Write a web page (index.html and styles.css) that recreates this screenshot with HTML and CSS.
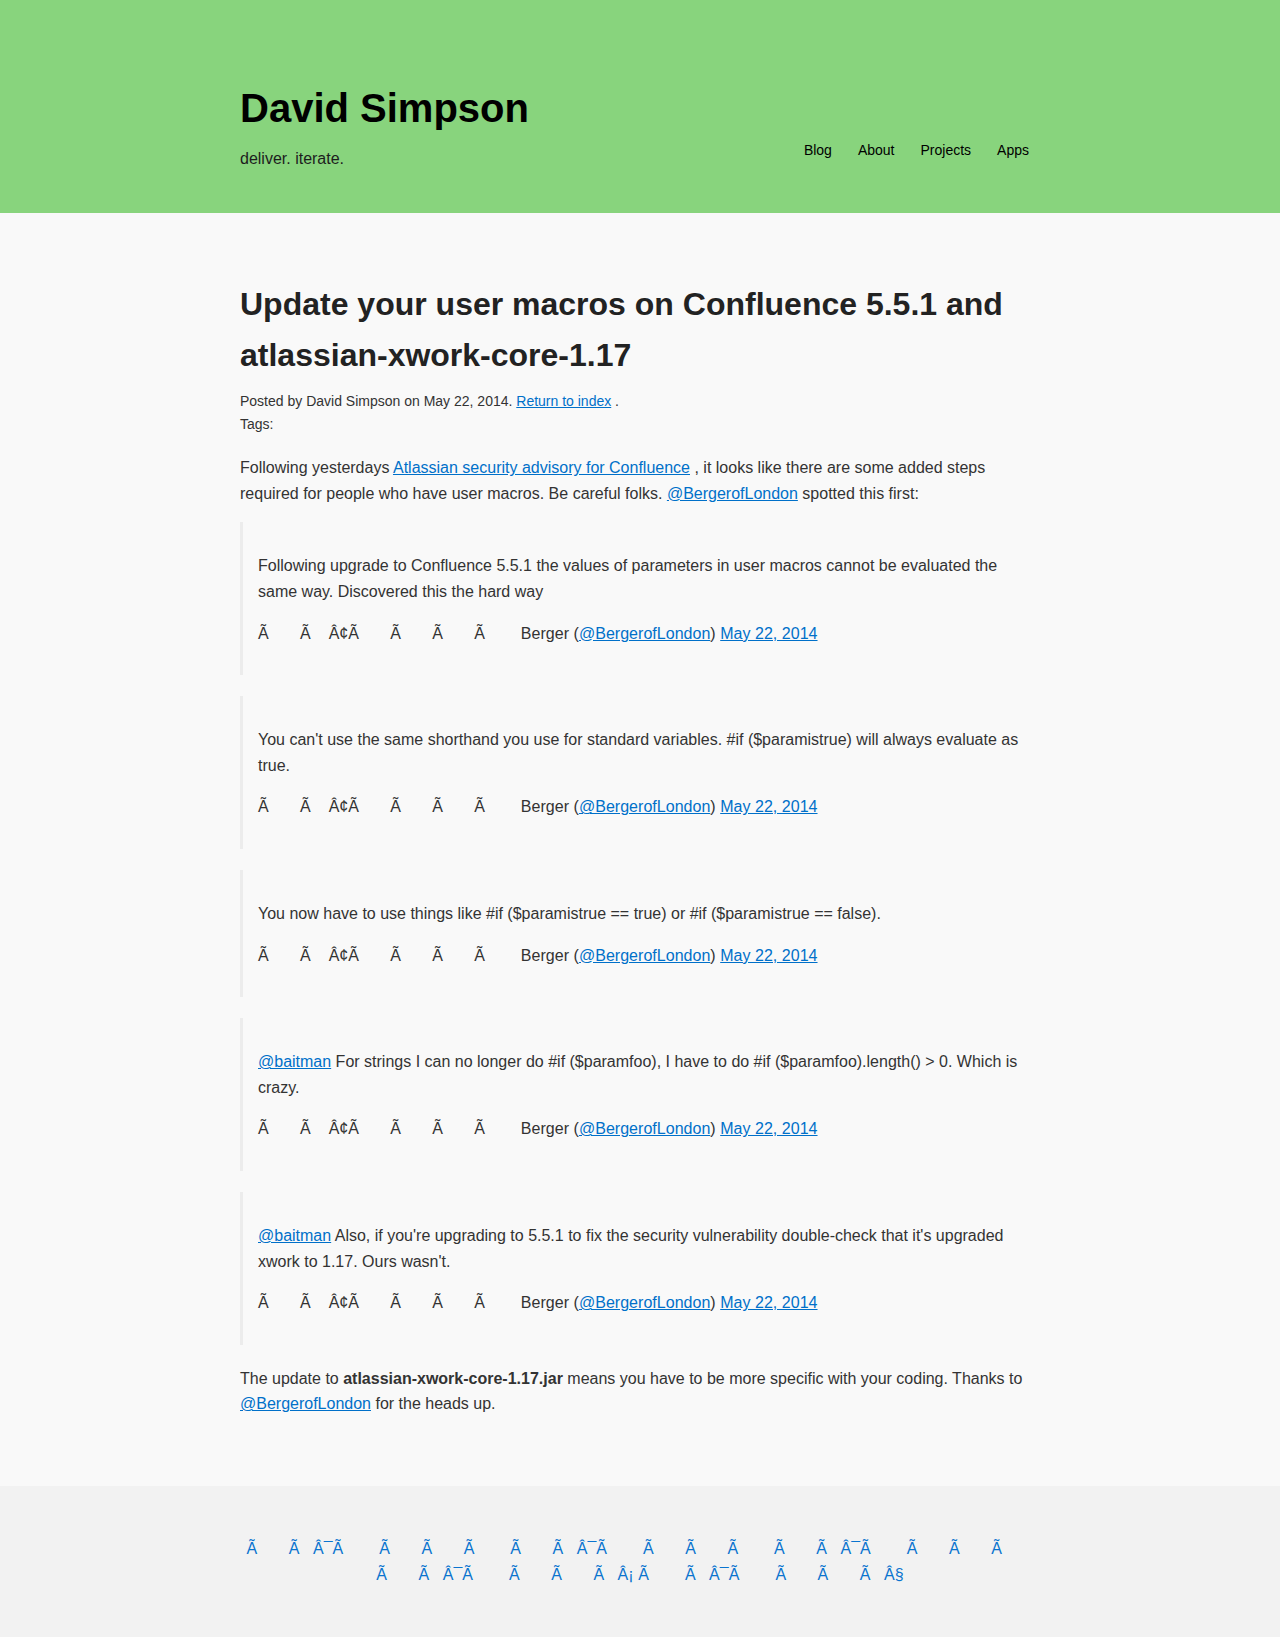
FILE: index.html
```html
<!DOCTYPE html>
<html lang="en">
<head>
<meta charset="utf-8">
<title>Update your user macros on Confluence 5.5.1 and atlassian-xwork-core-1.17 - David Simpson</title>
<link rel="stylesheet" href="styles.css">
</head>
<body>
<header class="site-header">
  <div class="wrap header-inner">
    <div class="brand">
      <h1 class="site-title">David Simpson</h1>
      <p class="tagline">deliver. iterate.</p>
    </div>
    <nav class="site-nav">
      <a href="#">Blog</a>
      <a href="#">About</a>
      <a href="#">Projects</a>
      <a href="#">Apps</a>
    </nav>
  </div>
</header>

<main class="wrap post">
  <h1 class="post-title">Update your user macros on Confluence 5.5.1 and atlassian-xwork-core-1.17</h1>
  <div class="meta">
    <p>Posted by David Simpson on May 22, 2014. <a href="#">Return to index</a> .</p>
    <p>Tags:</p>
  </div>

  <p>Following yesterdays <a href="#">Atlassian security advisory for Confluence</a> , it looks like there are some added steps required for people who have user macros. Be careful folks. <a href="#">@BergerofLondon</a> spotted this first:</p>

  <blockquote class="tweet">
    <p>Following upgrade to Confluence 5.5.1 the values of parameters in user macros cannot be evaluated the same way. Discovered this the hard way</p>
    <p class="tweet-meta">Ã&nbsp;&nbsp;&nbsp;&nbsp;&nbsp;&nbsp;&nbsp;Ã&nbsp;&nbsp;&nbsp;&nbsp;Â¢Ã&nbsp;&nbsp;&nbsp;&nbsp;&nbsp;&nbsp;&nbsp;Ã&nbsp;&nbsp;&nbsp;&nbsp;&nbsp;&nbsp;&nbsp;Ã&nbsp;&nbsp;&nbsp;&nbsp;&nbsp;&nbsp;&nbsp;Ã&nbsp;&nbsp;&nbsp;&nbsp;&nbsp;&nbsp;&nbsp; Berger (<a href="#">@BergerofLondon</a>) <a href="#">May 22, 2014</a></p>
  </blockquote>

  <blockquote class="tweet">
    <p>You can't use the same shorthand you use for standard variables. #if ($paramistrue) will always evaluate as true.</p>
    <p class="tweet-meta">Ã&nbsp;&nbsp;&nbsp;&nbsp;&nbsp;&nbsp;&nbsp;Ã&nbsp;&nbsp;&nbsp;&nbsp;Â¢Ã&nbsp;&nbsp;&nbsp;&nbsp;&nbsp;&nbsp;&nbsp;Ã&nbsp;&nbsp;&nbsp;&nbsp;&nbsp;&nbsp;&nbsp;Ã&nbsp;&nbsp;&nbsp;&nbsp;&nbsp;&nbsp;&nbsp;Ã&nbsp;&nbsp;&nbsp;&nbsp;&nbsp;&nbsp;&nbsp; Berger (<a href="#">@BergerofLondon</a>) <a href="#">May 22, 2014</a></p>
  </blockquote>

  <blockquote class="tweet">
    <p>You now have to use things like #if ($paramistrue == true) or #if ($paramistrue == false).</p>
    <p class="tweet-meta">Ã&nbsp;&nbsp;&nbsp;&nbsp;&nbsp;&nbsp;&nbsp;Ã&nbsp;&nbsp;&nbsp;&nbsp;Â¢Ã&nbsp;&nbsp;&nbsp;&nbsp;&nbsp;&nbsp;&nbsp;Ã&nbsp;&nbsp;&nbsp;&nbsp;&nbsp;&nbsp;&nbsp;Ã&nbsp;&nbsp;&nbsp;&nbsp;&nbsp;&nbsp;&nbsp;Ã&nbsp;&nbsp;&nbsp;&nbsp;&nbsp;&nbsp;&nbsp; Berger (<a href="#">@BergerofLondon</a>) <a href="#">May 22, 2014</a></p>
  </blockquote>

  <blockquote class="tweet">
    <p><a href="#">@baitman</a> For strings I can no longer do #if ($paramfoo), I have to do #if ($paramfoo).length() &gt; 0. Which is crazy.</p>
    <p class="tweet-meta">Ã&nbsp;&nbsp;&nbsp;&nbsp;&nbsp;&nbsp;&nbsp;Ã&nbsp;&nbsp;&nbsp;&nbsp;Â¢Ã&nbsp;&nbsp;&nbsp;&nbsp;&nbsp;&nbsp;&nbsp;Ã&nbsp;&nbsp;&nbsp;&nbsp;&nbsp;&nbsp;&nbsp;Ã&nbsp;&nbsp;&nbsp;&nbsp;&nbsp;&nbsp;&nbsp;Ã&nbsp;&nbsp;&nbsp;&nbsp;&nbsp;&nbsp;&nbsp; Berger (<a href="#">@BergerofLondon</a>) <a href="#">May 22, 2014</a></p>
  </blockquote>

  <blockquote class="tweet">
    <p><a href="#">@baitman</a> Also, if you're upgrading to 5.5.1 to fix the security vulnerability double-check that it's upgraded xwork to 1.17. Ours wasn't.</p>
    <p class="tweet-meta">Ã&nbsp;&nbsp;&nbsp;&nbsp;&nbsp;&nbsp;&nbsp;Ã&nbsp;&nbsp;&nbsp;&nbsp;Â¢Ã&nbsp;&nbsp;&nbsp;&nbsp;&nbsp;&nbsp;&nbsp;Ã&nbsp;&nbsp;&nbsp;&nbsp;&nbsp;&nbsp;&nbsp;Ã&nbsp;&nbsp;&nbsp;&nbsp;&nbsp;&nbsp;&nbsp;Ã&nbsp;&nbsp;&nbsp;&nbsp;&nbsp;&nbsp;&nbsp; Berger (<a href="#">@BergerofLondon</a>) <a href="#">May 22, 2014</a></p>
  </blockquote>

  <p>The update to <strong>atlassian-xwork-core-1.17.jar</strong> means you have to be more specific with your coding. Thanks to <a href="#">@BergerofLondon</a> for the heads up.</p>
</main>

<footer class="site-footer">
  <div class="wrap">
    <p class="footer-text">Ã&nbsp;&nbsp;&nbsp;&nbsp;&nbsp;&nbsp;&nbsp;Ã&nbsp;&nbsp;&nbsp;Â¯Ã&nbsp;&nbsp;&nbsp;&nbsp;&nbsp;&nbsp;&nbsp; Ã&nbsp;&nbsp;&nbsp;&nbsp;&nbsp;&nbsp;&nbsp;Ã&nbsp;&nbsp;&nbsp;&nbsp;&nbsp;&nbsp;&nbsp;Ã&nbsp;&nbsp;&nbsp;&nbsp;&nbsp;&nbsp;&nbsp; Ã&nbsp;&nbsp;&nbsp;&nbsp;&nbsp;&nbsp;&nbsp;Ã&nbsp;&nbsp;&nbsp;Â¯Ã&nbsp;&nbsp;&nbsp;&nbsp;&nbsp;&nbsp;&nbsp; Ã&nbsp;&nbsp;&nbsp;&nbsp;&nbsp;&nbsp;&nbsp;Ã&nbsp;&nbsp;&nbsp;&nbsp;&nbsp;&nbsp;&nbsp;Ã&nbsp;&nbsp;&nbsp;&nbsp;&nbsp;&nbsp;&nbsp; Ã&nbsp;&nbsp;&nbsp;&nbsp;&nbsp;&nbsp;&nbsp;Ã&nbsp;&nbsp;&nbsp;Â¯Ã&nbsp;&nbsp;&nbsp;&nbsp;&nbsp;&nbsp;&nbsp; Ã&nbsp;&nbsp;&nbsp;&nbsp;&nbsp;&nbsp;&nbsp;Ã&nbsp;&nbsp;&nbsp;&nbsp;&nbsp;&nbsp;&nbsp;Ã&nbsp;&nbsp;&nbsp;&nbsp;&nbsp;&nbsp;&nbsp; Ã&nbsp;&nbsp;&nbsp;&nbsp;&nbsp;&nbsp;&nbsp;Ã&nbsp;&nbsp;&nbsp;Â¯Ã&nbsp;&nbsp;&nbsp;&nbsp;&nbsp;&nbsp;&nbsp; Ã&nbsp;&nbsp;&nbsp;&nbsp;&nbsp;&nbsp;&nbsp;Ã&nbsp;&nbsp;&nbsp;&nbsp;&nbsp;&nbsp;&nbsp;Ã&nbsp;&nbsp;&nbsp;Â¡&nbsp;Ã&nbsp;&nbsp;&nbsp;&nbsp;&nbsp;&nbsp;&nbsp; Ã&nbsp;&nbsp;&nbsp;Â¯Ã&nbsp;&nbsp;&nbsp;&nbsp;&nbsp;&nbsp;&nbsp; Ã&nbsp;&nbsp;&nbsp;&nbsp;&nbsp;&nbsp;&nbsp;Ã&nbsp;&nbsp;&nbsp;&nbsp;&nbsp;&nbsp;&nbsp;Ã&nbsp;&nbsp;&nbsp;Â§</p>
  </div>
</footer>
</body>
</html>
```

FILE: styles.css
```css
* {
  box-sizing: border-box;
}

html {
  background: #f9f9f9;
}

body {
  margin: 0;
  background: #f9f9f9;
  color: #333;
  font-family: "Liberation Sans", Arial, Helvetica, sans-serif;
  font-size: 16px;
  line-height: 1.6;
}

a {
  color: #0070c9;
  text-decoration: underline;
}

.wrap {
  width: 800px;
  margin: 0 auto;
}

/* Header */
.site-header {
  background: #88d47d;
  padding: 84.5px 0 42px;
}

.header-inner {
  display: flex;
  justify-content: space-between;
  align-items: flex-end;
}

.site-title {
  margin: 0;
  font-size: 40px;
  line-height: 46px;
  font-weight: bold;
  color: #000;
}

.tagline {
  margin: 15px 0 0;
  font-size: 16px;
  line-height: 1.6;
  color: #1d1d1d;
}

.site-nav {
  display: flex;
  padding-bottom: 9.5px;
  margin-right: -2px;
}

.site-nav a {
  padding: 0 13px;
  font-size: 14px;
  line-height: 1.6;
  color: #000;
  text-decoration: none;
}

/* Post */
.post {
  padding: 66px 0 53px;
}

.post-title {
  margin: 0 0 9px;
  font-size: 32px;
  line-height: 1.6;
  font-weight: bold;
  color: #222;
}

.meta {
  margin: 0 0 20px;
  font-size: 14px;
  line-height: 1.6;
}

.post p {
  margin-top: 16px;
  margin-bottom: 16px;
}

.post .meta p {
  margin: 0;
}

.post .meta + p {
  margin-top: 0;
}

.tweet {
  margin: 16px 0 21px;
  padding: 15px 14px 13px 15px;
  border-left: 3px solid #ececec;
}

.post .tweet p {
  margin: 16px 0;
}

.post .tweet .tweet-meta {
  letter-spacing: 0.03px;
}

/* Footer */
.site-footer {
  background: #f2f2f2;
  padding: 34px 0;
}

.footer-text {
  margin: 16px 0;
  text-align: center;
  color: #0a74cf;
  line-height: 1.6;
  letter-spacing: 0.05px;
}
```
